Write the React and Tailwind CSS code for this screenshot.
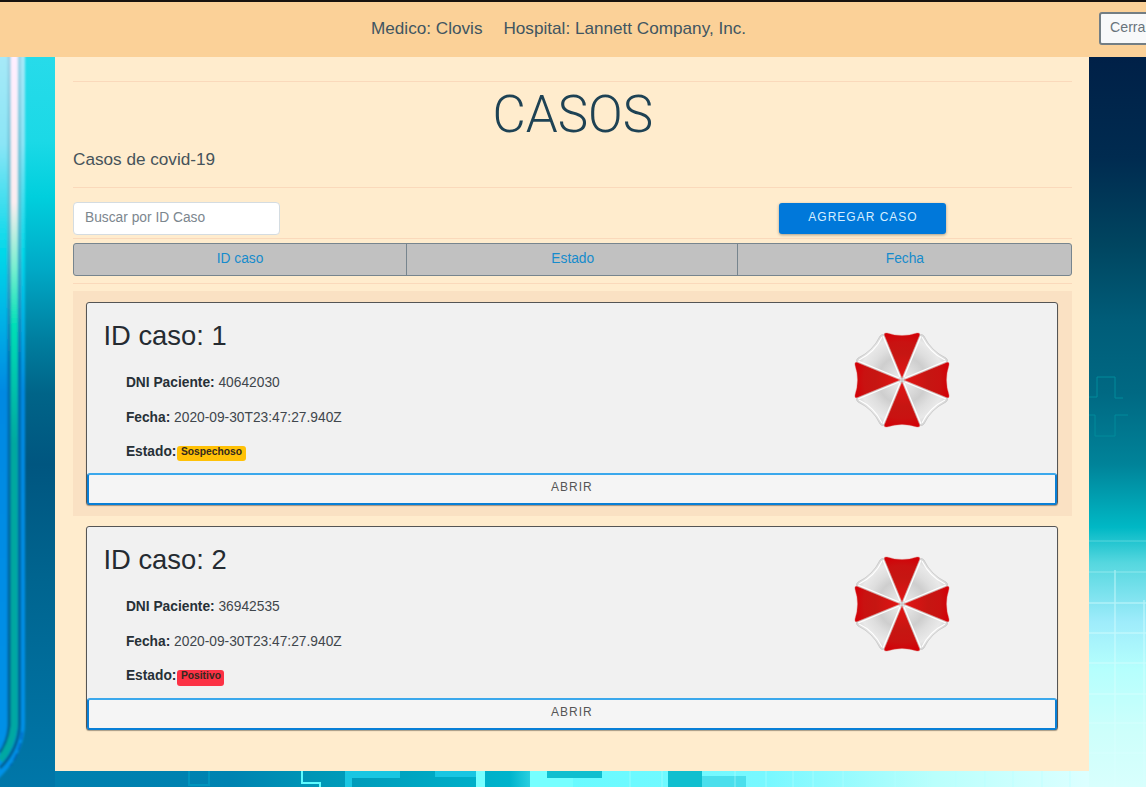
import React from "react";

const cases = [
  { id: 1, dni: "40642030", date: "2020-09-30T23:47:27.940Z", status: "Sospechoso", badge: "bg-[#ffc107] h-[15px]", row: "h-[225px] bg-[#fae1c3]", card: "h-[203px]" },
  { id: 2, dni: "36942535", date: "2020-09-30T23:47:27.940Z", status: "Positivo", badge: "bg-[#fc3245] h-4", row: "h-[225px] -mt-px", card: "h-[204px]" },
];

function Backdrop() {
  return (
    <svg className="absolute inset-0 h-full w-full" viewBox="0 0 1146 787" preserveAspectRatio="none" aria-hidden="true">
      <defs>
        <linearGradient id="left" gradientUnits="userSpaceOnUse" x1="0" y1="0" x2="0" y2="787">
          <stop offset="0.07" stopColor="#27dbea" />
          <stop offset="0.18" stopColor="#1bd9e6" />
          <stop offset="0.25" stopColor="#00cfdd" />
          <stop offset="0.34" stopColor="#00aac7" />
          <stop offset="0.43" stopColor="#007fa0" />
          <stop offset="0.5" stopColor="#006488" />
          <stop offset="0.59" stopColor="#005680" />
          <stop offset="0.74" stopColor="#006590" />
          <stop offset="1" stopColor="#0077a9" />
        </linearGradient>
        <linearGradient id="right" gradientUnits="userSpaceOnUse" x1="0" y1="0" x2="0" y2="787">
          <stop offset="0.07" stopColor="#002047" />
          <stop offset="0.2" stopColor="#002b50" />
          <stop offset="0.31" stopColor="#004560" />
          <stop offset="0.41" stopColor="#005d79" />
          <stop offset="0.5" stopColor="#006983" />
          <stop offset="0.59" stopColor="#008399" />
          <stop offset="0.67" stopColor="#00b8c5" />
          <stop offset="0.715" stopColor="#55d7df" />
          <stop offset="0.79" stopColor="#9eecfb" />
          <stop offset="0.85" stopColor="#b5fffd" />
          <stop offset="0.93" stopColor="#cdfffb" />
          <stop offset="1" stopColor="#d8fffd" />
        </linearGradient>
        <linearGradient id="floor" x1="0" x2="1" y1="0" y2="0">
          <stop offset="0" stopColor="#007fae" />
          <stop offset="0.17" stopColor="#0083b1" />
          <stop offset="0.25" stopColor="#0096b6" />
          <stop offset="0.44" stopColor="#00b4cc" />
          <stop offset="0.49" stopColor="#68fbff" />
          <stop offset="0.69" stopColor="#78f8ff" />
          <stop offset="0.85" stopColor="#b9fffc" />
          <stop offset="1" stopColor="#dcffff" />
        </linearGradient>
        <linearGradient id="outer" gradientUnits="userSpaceOnUse" x1="0" y1="56" x2="0" y2="787">
          <stop offset="0" stopColor="#a7e9f8" />
          <stop offset="0.12" stopColor="#8be5f6" />
          <stop offset="0.27" stopColor="#00d8e9" />
          <stop offset="0.46" stopColor="#0089e2" />
          <stop offset="1" stopColor="#0092e8" />
        </linearGradient>
        <linearGradient id="inner" gradientUnits="userSpaceOnUse" x1="0" y1="56" x2="0" y2="787">
          <stop offset="0" stopColor="#ffefff" />
          <stop offset="0.2" stopColor="#fcedf0" />
          <stop offset="0.29" stopColor="#79efcf" />
          <stop offset="0.37" stopColor="#00dfb5" />
          <stop offset="0.53" stopColor="#00a99e" />
          <stop offset="1" stopColor="#00a8a3" />
        </linearGradient>
        <linearGradient id="edge" gradientUnits="userSpaceOnUse" x1="0" y1="56" x2="0" y2="787">
          <stop offset="0" stopColor="#9bd3e8" />
          <stop offset="0.22" stopColor="#54bccf" />
          <stop offset="0.42" stopColor="#006aac" />
          <stop offset="1" stopColor="#005e8d" />
        </linearGradient>
        <filter id="soften" filterUnits="userSpaceOnUse" x="-10" y="40" width="50" height="760"><feGaussianBlur stdDeviation="0.9" /></filter>
      </defs>
      <rect width="600" height="787" fill="url(#left)" />
      <rect x="600" width="546" height="787" fill="url(#right)" />
      <g filter="url(#soften)">
        <path d="M-5 50V782Q25 755 25 723V50Z" fill="url(#outer)" />
        <path d="M19.5 50V724Q19 749 0 768" fill="none" stroke="url(#edge)" strokeWidth="3" />
        <path d="M9.3 50V726Q8 743 0 753" fill="none" stroke="url(#edge)" strokeWidth="3.5" />
        <path d="M14.2 50V726Q12 746 0 760" fill="none" stroke="url(#inner)" strokeWidth="7" />
        <path d="M22 732Q21 750 10 766" fill="none" stroke="#003ba8" strokeWidth="1" strokeDasharray="8 3" />
      </g>
      <path d="M1089 397h8v-20h18v21M1089 415h6v21h20v-21M1115 398h8M1115 415h13" fill="none" stroke="#008b9b" strokeWidth="1" />
      <g stroke="#dcffff" strokeWidth="1.5" opacity="0.5">
        <path d="M1089 541h57" opacity="0.4" />
        <path d="M1089 572h57" opacity="0.5" />
        <path d="M1089 603h57M1089 633h57M1089 663h57M1089 694h57M1089 723h57M1089 753h57M1115 570v217M1144 600v187" />
      </g>
      <rect x="55" y="768" width="1034" height="19" fill="url(#floor)" />
      <path d="M189 771v14h20v-14" fill="none" stroke="#0094bd" strokeWidth="2" />
      <path d="M302 771v12h18v8" fill="none" stroke="#5dfbff" strokeWidth="2" />
      <path d="M345 770h55v8h-48v9h-7ZM435 771h42v6h-42Z" fill="#19c6e2" />
      <path d="M476 770h9v17h-9ZM530 770h43v17h-43Z" fill="#76ffff" />
      <path d="M547 770h55v8h-55ZM668 770h34v17h-34Z" fill="#10bfcf" />
      <path d="M702 776h44v11h-44Z" fill="#4bdfec" />
      <path d="M630 770v17M662 770v17M735 770v17M766 770v17M793 770v17M813 770v17M843 770v17M895 770v17M927 770v17M956 770v17M985 770v17M1013 770v17M1042 770v17M1070 770v17" stroke="#b5ffff" opacity="0.55" />
    </svg>
  );
}

function Umbrella() {
  return (
    <svg className="h-[100px] w-[100px]" viewBox="-50 -50 100 100" aria-hidden="true">
      <defs>
        <radialGradient id="silver" gradientUnits="userSpaceOnUse" cx="0" cy="0" r="48">
          <stop offset="0" stopColor="#eee" />
          <stop offset="0.25" stopColor="#dedede" />
          <stop offset="0.5" stopColor="#cecece" />
          <stop offset="0.68" stopColor="#dedede" />
          <stop offset="0.88" stopColor="#e9e9e9" />
          <stop offset="1" stopColor="#d8d8d8" />
        </radialGradient>
        <radialGradient id="red" gradientUnits="userSpaceOnUse" cx="0" cy="0" r="48">
          <stop offset="0" stopColor="#e51414" />
          <stop offset="0.55" stopColor="#c61612" />
          <stop offset="0.8" stopColor="#c91211" />
          <stop offset="1" stopColor="#d30007" />
        </radialGradient>
      </defs>
      {[0, 90, 180, 270].map((angle) => (
        <g key={angle} transform={`rotate(${angle})`}>
          <path d="M0 0 18 -45Q20 -46.5 22 -44Q29 -29 44 -22Q46.500 -20 45 -18Z" fill="url(#silver)" stroke="#cbcbcb" strokeWidth="0.9" />
          <path d="M20 -43Q28 -27 43 -20" fill="none" stroke="#fff" strokeWidth="1.1" />
          <path d="M2 -3 19 -44M3 -2 44 -19" stroke="#fff" strokeWidth="1.2" />
        </g>
      ))}
      {[0, 90, 180, 270].map((angle) => (
        <path key={angle} transform={`rotate(${angle})`} d="M0 -2-17.8-45.3Q-18-47.6-15-47 0-42 15-47 18-47.6 17.8-45.3Z" fill="url(#red)" stroke="#dc6a65" strokeWidth="0.4" />
      ))}
    </svg>
  );
}

function CaseCard({ item }) {
  return (
    <article className={`flex flex-col rounded-[3px] border border-[#555] bg-[#f1f1f1] shadow-[0_1px_1px_rgba(0,0,0,0.35)] ${item.card}`}>
      <div className="flex min-h-0 flex-1 justify-between pl-4 pr-[104.5px]">
        <div>
          <h2 className="mt-[15px] text-[27.4px] leading-9 text-[#252b31]">ID caso: {item.id}</h2>
          <div className="mt-[19px] ml-[22.5px] flex flex-col gap-[14.5px] text-[13.78px] leading-5 text-[#40464c]">
            <p><strong className="text-[#273037]">DNI Paciente:</strong> {item.dni}</p>
            <p><strong className="text-[#273037]">Fecha:</strong> {item.date}</p>
            <p className="flex h-5 items-center">
              <strong className="text-[#273037]">Estado:</strong>
              <strong className={`mt-[3px] ml-px flex items-center rounded-[3px] px-[3.5px] pb-[2px] text-[10.3px] leading-none text-[#33291e] ${item.badge}`}>{item.status}</strong>
            </p>
          </div>
        </div>
        <div className="mt-[27px]"><Umbrella /></div>
      </div>
      <button className="-mb-px h-8 shrink-0 rounded-[3px] border-2 border-t-[#3ba8ec] border-r-[#087fd6] border-b-[#087fd6] border-l-[#087fd6] bg-[#f5f5f5] pb-1 text-xs tracking-[1px] text-[#555]">ABRIR</button>
    </article>
  );
}

export default function App() {
  return (
    <div className="relative h-[787px] w-full overflow-hidden font-['Liberation_Sans',sans-serif]">
      <Backdrop />
      <div className="relative flex h-full flex-col">
        <header className="grid h-[57px] shrink-0 grid-cols-[371px_728px_47px] border-t-2 border-[#17120e] bg-[#fbd198]">
          <div />
          <div className="flex gap-[21px] pt-[14px] text-[17.15px] leading-6 text-[#405561]">
            <span>Medico: Clovis</span>
            <span>Hospital: Lannett Company, Inc.</span>
          </div>
          <div className="pt-[10px]">
            <button className="h-[33px] w-[60px] rounded-[3px] border-2 border-[#737e84] bg-[#f8f9fa] pb-[2px] pl-[9px] text-left text-[14.2px] whitespace-nowrap text-[#68747c]">Cerrar</button>
          </div>
        </header>
        <main className="ml-[55px] flex h-[714px] w-[1034px] flex-col bg-[#ffeccd] pr-[17.5px] pl-[18px] pt-[24px]">
          <hr className="border-t-[1.5px] border-[#fad9bb]" />
          <h1 className="mt-[3px] h-[60px] pl-px text-center font-['Roboto',sans-serif] text-[51.2px] leading-[60px] font-light text-[#1e4254]">CASOS</h1>
          <p className="mt-[2px] h-6 text-[17.17px] leading-6 text-[#46535a]">Casos de covid-19</p>
          <hr className="mt-[16px] border-[#fad9bb]" />
          <div className="mt-[14px] flex h-[33px] items-start justify-between pr-[125.5px]">
            <input className="h-[33px] w-[207px] rounded-[4px] border border-[#d4dce1] bg-white px-[11px] pb-[3px] text-[13.78px] placeholder:text-[#7c868e]" placeholder="Buscar por ID Caso" />
            <button className="mt-px h-[31px] w-[167px] rounded-[3px] bg-[#0078da] pb-[4px] pl-px text-xs tracking-[1px] text-[#d6eeff] shadow-[0_1px_3px_rgba(0,0,0,0.35)]">AGREGAR CASO</button>
          </div>
          <hr className="mt-[3px] border-[#fad9bb]" />
          <div className="mt-1 grid h-[33px] shrink-0 grid-cols-3 rounded-[3px] border border-[#77858e] bg-[#c1c1c1] text-center text-[13.78px] leading-7 text-[#168bcc]">
            <button className="pb-[2px]">ID caso</button>
            <button className="border-x border-[#77858e] pb-[2px] pl-px">Estado</button>
            <button className="pb-[2px] pl-px">Fecha</button>
          </div>
          <hr className="mt-[7px] border-[#fad9bb]" />
          <div className="mt-[7px] flex flex-col">
            {cases.map((item) => (
              <section key={item.id} className={`pr-[14px] pl-[13.4px] pt-[11px] ${item.row}`}>
                <CaseCard item={item} />
              </section>
            ))}
          </div>
        </main>
      </div>
    </div>
  );
}
